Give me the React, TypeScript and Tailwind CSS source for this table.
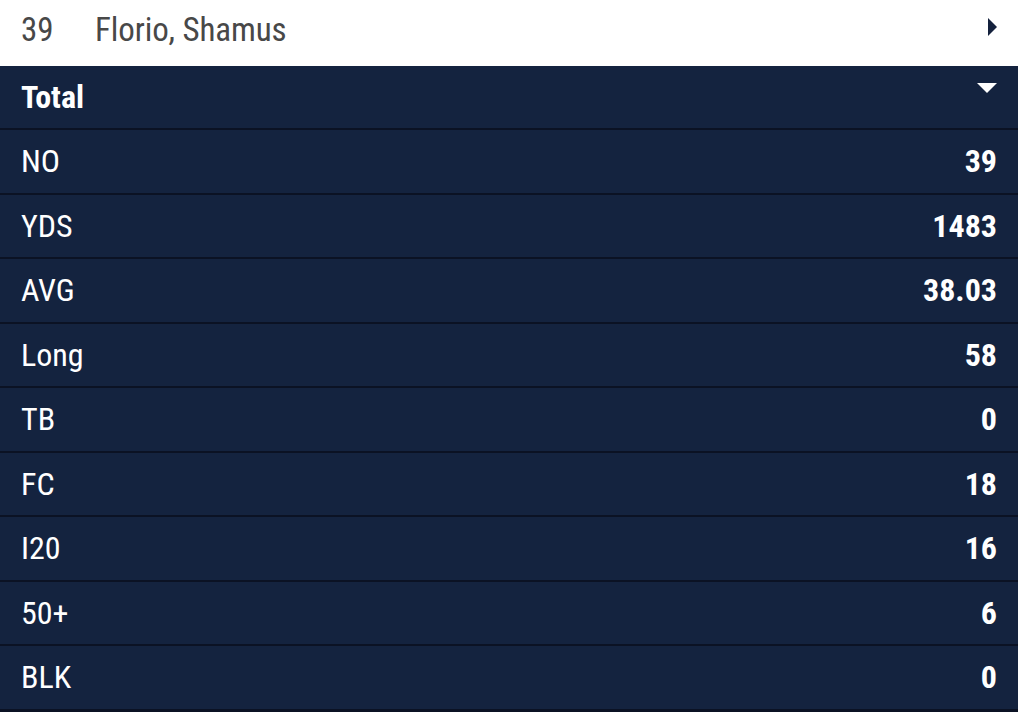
const rows: [string, string][] = [
  ["NO", "39"],
  ["YDS", "1483"],
  ["AVG", "38.03"],
  ["Long", "58"],
  ["TB", "0"],
  ["FC", "18"],
  ["I20", "16"],
  ["50+", "6"],
  ["BLK", "0"],
];

export default function App() {
  return (
    <div className="w-[1018px] h-[712px] overflow-hidden bg-[#0b1224] font-['Roboto',sans-serif] font-stretch-condensed">
      <div className="flex items-center h-[66px] pb-[6px] bg-white px-[21px] text-[#484848] text-[33px]">
        <span className="w-[74px]">39</span>
        <span className="flex-1 tracking-[-0.1px]">Florio, Shamus</span>
        <svg width="10" height="18" viewBox="0 0 10 18" className="mr-[-1px] mb-[6px]">
          <path d="M0 0 L9 9 L0 18 Z" fill="#14213d" />
        </svg>
      </div>
      <div className="flex items-center h-[62px] bg-[#14233f] px-[21px] text-white text-[32px] font-bold">
        <span className="flex-1">Total</span>
        <svg width="20" height="10" viewBox="0 0 20 10" className="mb-[18px]">
          <path d="M0 0 L20 0 L10 10 Z" fill="#fff" />
        </svg>
      </div>
      {rows.map(([k, v]) => (
        <div
          key={k}
          className="flex items-center justify-between h-[62.5px] mt-[2px] bg-[#14233f] px-[21px] text-white text-[32px]"
        >
          <span>{k}</span>
          <span className="font-bold">{v}</span>
        </div>
      ))}
    </div>
  );
}
